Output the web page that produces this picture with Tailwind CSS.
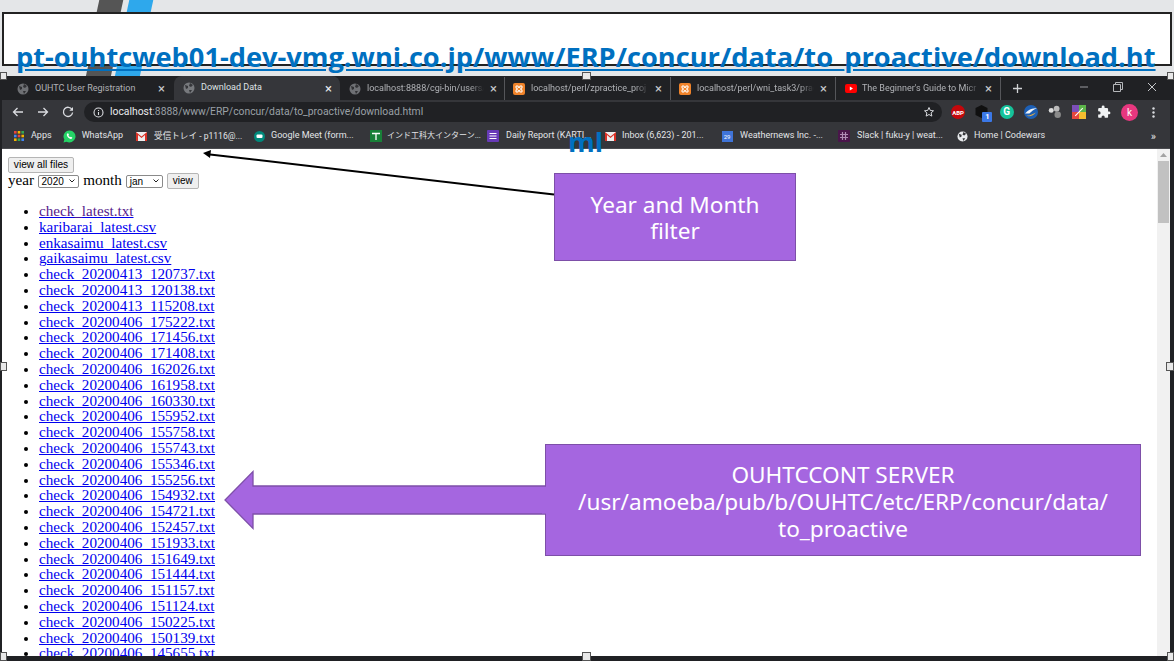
<!DOCTYPE html>
<html>
<head>
<meta charset="utf-8">
<script src="https://cdn.jsdelivr.net/npm/@tailwindcss/browser@4"></script>
</head>
<body class="m-0 bg-[#e4e6e8]">
<div class="relative w-[1174px] h-[661px] overflow-hidden bg-[#e4e6e8] font-['Roboto','Open_Sans',sans-serif]">

  <!-- slide background strip -->
  <div class="relative h-3 overflow-hidden">
    <div class="absolute left-[98px] top-0 w-[24px] h-3 bg-[#555] -skew-x-12"></div>
    <div class="absolute left-[128px] top-0 w-[24px] h-3 bg-[#2ea8ec] -skew-x-12"></div>
  </div>

  <!-- url text box -->
  <div class="relative z-10 h-[54px] mx-[2px] bg-white border-2 border-[#222] flex items-end">
    <a class="pl-[12px] font-['Open_Sans',sans-serif] font-bold text-[27.22px] leading-[30px] -mb-[8px] text-[#0070c0] underline whitespace-nowrap">pt-ouhtcweb01-dev-vmg.wni.co.jp/www/ERP/concur/data/to_proactive/download.ht</a>
  </div>

  <!-- band -->
  <div class="relative h-[10px] overflow-hidden">
    <div class="absolute left-[87px] top-0 w-[25px] h-[10px] bg-[#555] -skew-x-12"></div>
    <div class="absolute left-[116px] top-0 w-[25px] h-[10px] bg-[#2ea8ec] -skew-x-12"></div>
  </div>

  <!-- browser window -->
  <div class="h-[585px] bg-[#202124] pl-[2px] pr-[4px] flex flex-col">
    <!-- tabs -->
    <div class="h-6 shrink-0 flex items-end text-[9px] text-[#b0b2b6] whitespace-nowrap relative">
      <div class="w-[172px] h-[23px] flex items-center pl-[15px] pr-[9px] gap-[6px]">
        <svg class="w-[12px] h-[12px] shrink-0" viewBox="0 0 12 12"><circle cx="6" cy="6" r="5.5" fill="#6e7074"/><path d="M2 3l3 1 0 2-2 1zM7 1l3 2-2 2-2-1zM6 8l3 0-2 3z" fill="#303134"/></svg>
        <span class="flex-1 overflow-hidden">OUHTC User Registration</span>
        <span class="text-[13px] leading-none text-[#c8cacd]">×</span>
      </div>
      <div class="w-[166px] h-[24px] bg-[#35363a] rounded-t-lg flex items-center pl-[9px] pr-[8px] gap-[6px] text-[#dfe1e4]">
        <svg class="w-[12px] h-[12px] shrink-0" viewBox="0 0 12 12"><circle cx="6" cy="6" r="5.5" fill="#77797d"/><path d="M2 3l3 1 0 2-2 1zM7 1l3 2-2 2-2-1zM6 8l3 0-2 3z" fill="#35363a"/></svg>
        <span class="flex-1 overflow-hidden">Download Data</span>
        <span class="text-[13px] leading-none text-[#e8eaed]">×</span>
      </div>
      <div class="w-[165px] h-[23px] flex items-center pl-[9px] pr-[7px] gap-[6px] border-r border-[#55565a]">
        <svg class="w-[12px] h-[12px] shrink-0" viewBox="0 0 12 12"><circle cx="6" cy="6" r="5.5" fill="#6e7074"/><path d="M2 3l3 1 0 2-2 1zM7 1l3 2-2 2-2-1zM6 8l3 0-2 3z" fill="#303134"/></svg>
        <span class="flex-1 overflow-hidden [mask-image:linear-gradient(to_right,black_88%,transparent)]">localhost:8888/cgi-bin/users/</span>
        <span class="text-[13px] leading-none text-[#c8cacd]">×</span>
      </div>
      <div class="w-[166px] h-[23px] flex items-center pl-[8px] pr-[8px] gap-[6px] border-r border-[#55565a]">
        <svg class="w-[12px] h-[12px] shrink-0" viewBox="0 0 12 12"><rect width="12" height="12" rx="2" fill="#f0832a"/><path d="M3 3h2.2v1.5h1.6V3H9v2.2H7.8v1.6H9V9H6.8V7.5H5.2V9H3V6.8h1.2V5.2H3z" fill="none" stroke="#fff" stroke-width="1"/></svg>
        <span class="flex-1 overflow-hidden [mask-image:linear-gradient(to_right,black_88%,transparent)]">localhost/perl/zpractice_proj</span>
        <span class="text-[13px] leading-none text-[#c8cacd]">×</span>
      </div>
      <div class="w-[165px] h-[23px] flex items-center pl-[8px] pr-[8px] gap-[6px] border-r border-[#55565a]">
        <svg class="w-[12px] h-[12px] shrink-0" viewBox="0 0 12 12"><rect width="12" height="12" rx="2" fill="#f0832a"/><path d="M3 3h2.2v1.5h1.6V3H9v2.2H7.8v1.6H9V9H6.8V7.5H5.2V9H3V6.8h1.2V5.2H3z" fill="none" stroke="#fff" stroke-width="1"/></svg>
        <span class="flex-1 overflow-hidden [mask-image:linear-gradient(to_right,black_88%,transparent)]">localhost/perl/wni_task3/prac</span>
        <span class="text-[13px] leading-none text-[#c8cacd]">×</span>
      </div>
      <div class="w-[165px] h-[23px] flex items-center pl-[9px] pr-[8px] gap-[5px] border-r border-[#55565a]">
        <svg class="w-[12px] h-[9px] shrink-0" viewBox="0 0 12 9"><rect width="12" height="9" rx="2" fill="#f00"/><path d="M4.8 2.4L8 4.5 4.8 6.6z" fill="#fff"/></svg>
        <span class="flex-1 overflow-hidden [mask-image:linear-gradient(to_right,black_88%,transparent)]">The Beginner's Guide to Micr</span>
        <span class="text-[13px] leading-none text-[#c8cacd]">×</span>
      </div>
      <svg class="w-[11px] h-[11px] ml-[11px] mb-[6px]" viewBox="0 0 11 11"><path d="M5.5 1v9M1 5.5h9" stroke="#d0d2d5" stroke-width="1.3"/></svg>
      <div class="ml-auto flex items-center h-6 gap-[24px] pr-[13px] pb-[2px]">
        <svg class="w-[10px] h-[10px]" viewBox="0 0 10 10"><path d="M1 5h8" stroke="#9a9ca0"/></svg>
        <svg class="w-[10px] h-[10px]" viewBox="0 0 10 10"><path d="M.5 2.5h7v7h-7zM2.5 2.5v-2h7v7h-2" fill="none" stroke="#b5b7ba"/></svg>
        <svg class="w-[10px] h-[10px]" viewBox="0 0 10 10"><path d="M1 1l8 8M9 1l-8 8" stroke="#c4c6c9"/></svg>
      </div>
    </div>

    <!-- address bar -->
    <div class="h-6 shrink-0 bg-[#35363a] flex items-center pl-[10px]">
      <svg class="w-[12px] h-[12px] shrink-0" viewBox="0 0 12 12"><path d="M11 6H1.5M5.5 2L1.5 6l4 4" fill="none" stroke="#dadce0" stroke-width="1.3"/></svg>
      <svg class="w-[12px] h-[12px] shrink-0 ml-[13px]" viewBox="0 0 12 12"><path d="M1 6h9.5M6.5 2l4 4-4 4" fill="none" stroke="#dadce0" stroke-width="1.3"/></svg>
      <svg class="w-[12px] h-[12px] shrink-0 ml-[13px]" viewBox="0 0 12 12"><path d="M10 3.5A4.6 4.6 0 1 0 10.6 6.5" fill="none" stroke="#dadce0" stroke-width="1.3"/><path d="M11 1v3.7H7.3z" fill="#dadce0"/></svg>
      <div class="ml-[10px] w-[858px] h-[20px] bg-[#202124] rounded-full flex items-center pl-[8.5px] pr-[7px] text-[10.37px] whitespace-nowrap">
        <svg class="w-[11px] h-[11px] shrink-0" viewBox="0 0 11 11"><circle cx="5.5" cy="5.5" r="4.5" fill="none" stroke="#dadce0" stroke-width="1.1"/><path d="M5.5 5v3M5.5 3v1" stroke="#dadce0" stroke-width="1.1"/></svg>
        <span class="ml-[6.5px] text-[#e8eaed]">localhost</span><span class="text-[#9aa0a6]">:8888/www/ERP/concur/data/to_proactive/download.html</span>
        <svg class="w-[12px] h-[12px] ml-auto" viewBox="0 0 24 24"><path d="M12 3l2.7 6 6.3.6-4.8 4.2 1.5 6.4L12 17l-5.700 3.200 1.500-6.400L3 9.600 9.300 9z" fill="none" stroke="#dadce0" stroke-width="2"/></svg>
      </div>
      <div class="flex items-center ml-[9px] gap-[10.3px]">
        <span class="w-[14px] h-[14px] rounded-full bg-[#c4070b] text-white text-[6px] font-bold flex items-center justify-center">ABP</span>
        <span class="relative w-[14px] h-[14px]">
          <svg class="w-[13px] h-[13px]" viewBox="0 0 12 13"><path d="M6 0l6 3v7l-6 3-6-3V3z" fill="#101010"/></svg>
          <span class="absolute left-[7px] top-[7px] w-[10px] h-[10px] bg-[#3b78e7] rounded-[1px] text-white text-[7.500px] leading-[10px] text-center font-bold">1</span>
        </span>
        <span class="w-[14px] h-[14px] rounded-full bg-[#15c39a] text-white text-[10px] leading-[14px] text-center font-bold">G</span>
        <svg class="w-[14px] h-[14px]" viewBox="0 0 13 13"><circle cx="6.500" cy="6.500" r="6.500" fill="#1c5fb5"/><path d="M1 8c3-4 7-5 11-5-3 1-5 3-7 5z" fill="#f2f4f7"/><path d="M2 10c3 1 7 0 9-3-2 1-5 3-9 3z" fill="#f1b13c"/></svg>
        <svg class="w-[14px] h-[14px]" viewBox="0 0 13 13"><circle cx="3" cy="5" r="2.300" fill="#ddd"/><circle cx="8" cy="3.500" r="2.700" fill="#bbb"/><circle cx="9" cy="9" r="3" fill="#8a8a8a"/></svg>
        <svg class="w-[14px] h-[14px]" viewBox="0 0 13 13"><rect width="6.500" height="6.500" fill="#7c4fb8"/><rect x="6.500" width="6.500" height="6.500" fill="#5db54a"/><rect y="6.500" width="6.500" height="6.500" fill="#e4473f"/><rect x="6.500" y="6.500" width="6.500" height="6.500" fill="#f5bd2f"/><path d="M3 10l7-7" stroke="#fff"/></svg>
        <svg class="w-[14px] h-[14px]" viewBox="0 0 24 24"><path d="M20.500 11H19V7a2 2 0 0 0-2-2h-4V3.500a2.500 2.500 0 0 0-5 0V5H4a2 2 0 0 0-2 2v3.800h1.500a2.700 2.700 0 0 1 0 5.400H2V20a2 2 0 0 0 2 2h3.800v-1.500a2.700 2.700 0 0 1 5.400 0V22H17a2 2 0 0 0 2-2v-4h1.500a2.500 2.500 0 0 0 0-5z" fill="#f1f3f4"/></svg>
        <span class="w-[17px] h-[17px] rounded-full bg-[#e8377f] text-white text-[10px] leading-[17px] text-center">k</span>
        <svg class="w-[3px] h-[11px] ml-[3.500px]" viewBox="0 0 3 11"><circle cx="1.500" cy="1.500" r="1.200" fill="#dadce0"/><circle cx="1.500" cy="5.500" r="1.200" fill="#dadce0"/><circle cx="1.500" cy="9.500" r="1.200" fill="#dadce0"/></svg>
      </div>
    </div>

    <!-- bookmarks -->
    <div class="h-[25px] shrink-0 bg-[#35363a] border-b border-[#4a4b4f] flex items-center pl-[12px] pr-[14px] text-[9px] text-[#e3e5e8] whitespace-nowrap font-['Roboto','Noto_Sans_CJK_JP',sans-serif]">
      <svg class="w-[10px] h-[10px] shrink-0" viewBox="0 0 10 10"><g fill="#e8453c"><rect width="2.600" height="2.600"/></g><rect x="3.700" width="2.600" height="2.600" fill="#f5b400"/><rect x="7.400" width="2.600" height="2.600" fill="#34a853"/><rect y="3.700" width="2.600" height="2.600" fill="#4285f4"/><rect x="3.700" y="3.700" width="2.600" height="2.600" fill="#e8453c"/><rect x="7.400" y="3.700" width="2.600" height="2.600" fill="#f5b400"/><rect y="7.400" width="2.600" height="2.600" fill="#f5b400"/><rect x="3.700" y="7.400" width="2.600" height="2.600" fill="#34a853"/><rect x="7.400" y="7.400" width="2.600" height="2.600" fill="#4285f4"/></svg>
      <span class="ml-[7px]">Apps</span>
      <svg class="w-[13px] h-[13px] ml-[11px] shrink-0" viewBox="0 0 13 13"><path d="M6.500.5a6 6 0 0 0-5.100 9.100L.5 12.500l3-.8A6 6 0 1 0 6.500.5z" fill="#25d366"/><path d="M4.300 3.500c-.9.900-.6 2.500.8 4 1.400 1.400 3 1.800 3.900.9l.4-.7-1.500-1-.7.600c-.8-.3-1.500-1-1.800-1.800l.6-.7-.9-1.500z" fill="#fff"/></svg>
      <span class="ml-[6px]">WhatsApp</span>
      <svg class="w-[11px] h-[9px] ml-[13px] shrink-0" viewBox="0 0 11 9"><rect width="11" height="9" fill="#eee"/><path d="M0 0l5.500 4.500L11 0v9H9V3L5.500 6 2 3v6H0z" fill="#d93025"/></svg>
      <span class="ml-[7px] w-[87px] text-[8.6px]">受信トレイ - p1116@...</span>
      <svg class="w-[11px] h-[11px] ml-[12.500px] shrink-0" viewBox="0 0 11 11"><circle cx="5.500" cy="5.500" r="5.500" fill="#00897b"/><rect x="2.500" y="3.500" width="6" height="3.500" rx="1" fill="#fff"/></svg>
      <span class="ml-[6.500px] w-[88px]">Google Meet (form...</span>
      <svg class="w-[12px] h-[12px] ml-[11px] shrink-0" viewBox="0 0 12 12"><rect width="12" height="12" fill="#188038"/><path d="M2 3.500h8M6 3.500V10" stroke="#fff" stroke-width="1.300"/></svg>
      <span class="ml-[5px] w-[100px] text-[8px]">インド工科大インターン...</span>
      <svg class="w-[12px] h-[12px] shrink-0" viewBox="0 0 12 12"><rect width="12" height="12" rx="1" fill="#673ab7"/><path d="M2.500 3.500h7M2.500 6h7M2.500 8.500h7" stroke="#fff"/></svg>
      <span class="ml-[7px] w-[84px]">Daily Report (KARTI...</span>
      <svg class="w-[11px] h-[9px] ml-[14.500px] shrink-0" viewBox="0 0 11 9"><rect width="11" height="9" fill="#eee"/><path d="M0 0l5.500 4.500L11 0v9H9V3L5.500 6 2 3v6H0z" fill="#d93025"/></svg>
      <span class="ml-[6.500px] w-[83px]">Inbox (6,623) - 201...</span>
      <span class="ml-[16.500px] w-[11px] h-[11px] bg-[#3f74d8] text-white text-[6px] leading-[12px] text-center shrink-0">29</span>
      <span class="ml-[7.500px] w-[82px]">Weathernews Inc. -...</span>
      <svg class="w-[12px] h-[12px] ml-[16px] shrink-0" viewBox="0 0 12 12"><rect width="12" height="12" rx="1" fill="#4a154b"/><path d="M4.500 2v8M7.500 2v8M2 4.500h8M2 7.500h8" stroke="#b08ab5" stroke-width="1.200"/></svg>
      <span class="ml-[7px] w-[86px]">Slack | fuku-y | weat...</span>
      <svg class="w-[11px] h-[11px] ml-[13.500px] shrink-0" viewBox="0 0 12 12"><circle cx="6" cy="6" r="5.500" fill="#e8eaed"/><path d="M2 3l3 1 0 2-2 1zM7 1l3 2-2 2-2-1zM6 8l3 0-2 3z" fill="#35363a"/></svg>
      <span class="ml-[6.500px]">Home | Codewars</span>
      <span class="ml-auto text-[11px] leading-none">»</span>
    </div>

    <!-- page -->
    <div class="flex-1 min-h-0 bg-white flex overflow-hidden mb-[5px]">
      <div class="flex-1 pl-[6px] pt-[8px] overflow-hidden font-['Liberation_Serif',serif] text-[15.14px] leading-[15.8px] text-black">
        <button class="block h-[15.5px] w-[66px] bg-[#efefef] border border-[#b5b5b5] rounded-[2px] font-['Liberation_Sans',sans-serif] text-[10.2px] leading-none text-black">view all files</button>
        <div class="flex items-center h-[17px]">
          <span>year</span>
          <span class="ml-[3.500px] w-[41px] h-[13px] border border-[#8a8a8a] rounded-[2px] font-['Liberation_Sans',sans-serif] text-[10px] leading-[11px] pl-[3px] flex items-center justify-between pr-[3px]">2020<svg class="w-[6px] h-[4px]" viewBox="0 0 6 4"><path d="M.5.500l2.500 2.500L5.500.500" fill="none" stroke="#222" stroke-width="1"/></svg></span>
          <span class="ml-[4.700px]">month</span>
          <span class="ml-[3.900px] w-[37px] h-[13px] border border-[#8a8a8a] rounded-[2px] font-['Liberation_Sans',sans-serif] text-[10px] leading-[11px] pl-[3px] flex items-center justify-between pr-[3px]">jan<svg class="w-[6px] h-[4px]" viewBox="0 0 6 4"><path d="M.5.500l2.500 2.500L5.500.500" fill="none" stroke="#222" stroke-width="1"/></svg></span>
          <button class="ml-[4px] w-[32px] h-[16px] bg-[#efefef] border border-[#b5b5b5] rounded-[2px] font-['Liberation_Sans',sans-serif] text-[10px] leading-none">view</button>
        </div>
        <ul class="mt-[14.500px] pl-[31px] list-disc text-[#0000ee] underline marker:text-black">
          <li><a class="text-[#551a8b]">check_latest.txt</a></li>
          <li><a>karibarai_latest.csv</a></li>
          <li><a>enkasaimu_latest.csv</a></li>
          <li><a>gaikasaimu_latest.csv</a></li>
          <li><a>check_20200413_120737.txt</a></li>
          <li><a>check_20200413_120138.txt</a></li>
          <li><a>check_20200413_115208.txt</a></li>
          <li><a>check_20200406_175222.txt</a></li>
          <li><a>check_20200406_171456.txt</a></li>
          <li><a>check_20200406_171408.txt</a></li>
          <li><a>check_20200406_162026.txt</a></li>
          <li><a>check_20200406_161958.txt</a></li>
          <li><a>check_20200406_160330.txt</a></li>
          <li><a>check_20200406_155952.txt</a></li>
          <li><a>check_20200406_155758.txt</a></li>
          <li><a>check_20200406_155743.txt</a></li>
          <li><a>check_20200406_155346.txt</a></li>
          <li><a>check_20200406_155256.txt</a></li>
          <li><a>check_20200406_154932.txt</a></li>
          <li><a>check_20200406_154721.txt</a></li>
          <li><a>check_20200406_152457.txt</a></li>
          <li><a>check_20200406_151933.txt</a></li>
          <li><a>check_20200406_151649.txt</a></li>
          <li><a>check_20200406_151444.txt</a></li>
          <li><a>check_20200406_151157.txt</a></li>
          <li><a>check_20200406_151124.txt</a></li>
          <li><a>check_20200406_150225.txt</a></li>
          <li><a>check_20200406_150139.txt</a></li>
          <li><a>check_20200406_145655.txt</a></li>
        </ul>
      </div>
      <!-- scrollbar -->
      <div class="w-[13px] shrink-0 bg-[#f1f1f1] flex flex-col items-center">
        <svg class="w-[7px] h-[4px] mt-[4px]" viewBox="0 0 7 4"><path d="M3.500 0L7 4H0z" fill="#a3a3a3"/></svg>
        <div class="w-[11px] h-[62px] mt-[4px] bg-[#c1c1c1]"></div>
      </div>
    </div>
  </div>

  <!-- wrapped url text overlaid on browser -->
  <span class="absolute left-[568px] top-[125.400px] font-['Open_Sans',sans-serif] font-bold text-[27.22px] leading-[34px] text-[#0070c0]">ml</span>

  <!-- callouts -->
  <div class="absolute left-[554px] top-[173px] w-[242px] h-[88px] bg-[#a566e0] border border-[#7d4fa8] flex items-center justify-center text-center text-white text-[22.6px] leading-[26px] font-['Noto_Sans',sans-serif] px-4 pt-[2px]">Year and Month filter</div>
  <div class="absolute left-[545px] top-[444px] w-[596px] h-[112px] bg-[#a566e0] border border-[#7d4fa8] flex items-center justify-center text-center text-white text-[22.6px] leading-[27px] font-['Noto_Sans',sans-serif] px-4 pt-[2px]">OUHTCCONT SERVER<br>/usr/amoeba/pub/b/OUHTC/etc/ERP/concur/data/<br>to_proactive</div>

  <!-- purple arrow -->
  <svg class="absolute left-[220px] top-[466px] w-[328px] h-[68px]" viewBox="0 0 328 68"><path d="M326 20H33V5.500L5 34l28 28.500V48h293" fill="#a566e0" stroke="#7d4fa8" stroke-width="1.300"/><rect x="322" y="21" width="6" height="26.500" fill="#a566e0"/></svg>

  <!-- black arrow -->
  <svg class="absolute left-[200px] top-[148px] w-[356px] h-[50px]" viewBox="0 0 356 50"><path d="M354 46.500L10 6.500" stroke="#000" stroke-width="2"/><path d="M3 5L11 2 10 10z" fill="#000"/></svg>

  <!-- selection handles -->
  <span class="absolute z-20 left-0 top-[72px] w-[7px] h-[8px] bg-[#e8e8e8] border border-[#555]"></span>
  <span class="absolute z-20 left-[582px] top-[72px] w-[9px] h-[8px] bg-[#e8e8e8] border border-[#555]"></span>
  <span class="absolute z-20 left-[1167px] top-[72px] w-[7px] h-[8px] bg-[#e8e8e8] border border-[#555]"></span>
  <span class="absolute z-20 left-0 top-[362px] w-[7px] h-[9px] bg-[#e8e8e8] border border-[#555]"></span>
  <span class="absolute z-20 left-[1166px] top-[362px] w-[8px] h-[9px] bg-[#e8e8e8] border border-[#555]"></span>
  <span class="absolute z-20 left-0 top-[652px] w-[7px] h-[9px] bg-[#e8e8e8] border border-[#555]"></span>
  <span class="absolute z-20 left-[582px] top-[652px] w-[9px] h-[9px] bg-[#e8e8e8] border border-[#555]"></span>
  <span class="absolute z-20 left-[1167px] top-[652px] w-[7px] h-[9px] bg-[#e8e8e8] border border-[#555]"></span>
</div>
</body>
</html>
